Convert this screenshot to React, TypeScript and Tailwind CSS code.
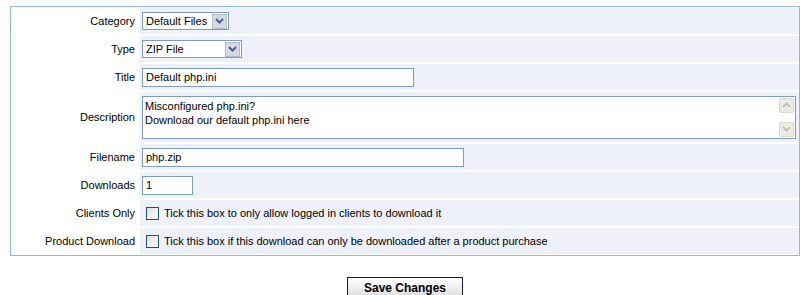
import React from "react"

const font = { fontFamily: '"Liberation Sans", Arial, sans-serif' }

function Label({ children }: { children: React.ReactNode }) {
  return <div className="flex items-center justify-end pr-[3px] text-[11px] text-black">{children}</div>
}

function Field({ children, tall }: { children: React.ReactNode; tall?: boolean }) {
  return (
    <div className={`flex items-center bg-[#eef1f9] pl-[2px] ${tall ? "h-[50px]" : "h-[26px]"}`}>{children}</div>
  )
}

function ArrowBox({ up }: { up?: boolean }) {
  return (
    <div className="flex h-[15px] w-[15px] items-center justify-center border border-[#b6bccb] bg-[#d4d9e6]">
      <svg width="9" height="6" viewBox="0 0 9 6">
        <path
          d={up ? "M1 5 L4.5 1.5 L8 5" : "M1 1 L4.5 4.5 L8 1"}
          fill="none"
          stroke="#4d6185"
          strokeWidth="2"
        />
      </svg>
    </div>
  )
}

function FakeSelect({ value, width }: { value: string; width: string }) {
  return (
    <div className={`flex h-[18px] items-center justify-between border border-[#7f9db9] bg-white pl-[3px] pr-[1px] ${width}`}>
      <span className="text-[11px] text-black">{value}</span>
      <ArrowBox />
    </div>
  )
}

function TextBox({ value, width }: { value: string; width: string }) {
  return (
    <div className={`flex h-[19px] items-center border border-[#7f9db9] bg-white pl-[3px] text-[11px] text-black ${width}`}>
      {value}
    </div>
  )
}

function Checkbox() {
  return (
    <div className="ml-[4px] mr-[5px] h-[13px] w-[13px] border border-[#1c5180] bg-gradient-to-br from-[#dcdcd7] to-white" />
  )
}

export default function App(): React.ReactElement {
  return (
    <div className="h-[295px] w-[808px] overflow-hidden bg-white" style={font}>
      <div className="ml-[10px] mt-[6px] w-[790px] border border-[#8db6e5] p-[1px]">
        <div className="grid grid-cols-[126px_659px] gap-[2px]">
          <Label>Category</Label>
          <Field>
            <FakeSelect value="Default Files" width="w-[87px]" />
          </Field>

          <Label>Type</Label>
          <Field>
            <FakeSelect value="ZIP File" width="w-[100px]" />
          </Field>

          <Label>Title</Label>
          <Field>
            <TextBox value="Default php.ini" width="w-[272px]" />
          </Field>

          <Label>Description</Label>
          <Field tall>
            <div className="flex h-[43px] w-[654px] border border-[#7f9db9] bg-white">
              <div className="flex-1 pl-[2px] pt-[2px] text-[11px] leading-[14px] text-black">
                Misconfigured php.ini?
                <br />
                Download our default php.ini here
              </div>
              <div className="flex w-[16px] flex-col justify-between bg-[#fbfbf9] py-[1px] pr-[1px]">
                <ArrowBoxScroll up />
                <ArrowBoxScroll />
              </div>
            </div>
          </Field>

          <Label>Filename</Label>
          <Field>
            <TextBox value="php.zip" width="w-[322px]" />
          </Field>

          <Label>Downloads</Label>
          <Field>
            <TextBox value="1" width="w-[51px]" />
          </Field>

          <Label>Clients Only</Label>
          <Field>
            <Checkbox />
            <span className="text-[11px] text-black">Tick this box to only allow logged in clients to download it</span>
          </Field>

          <Label>Product Download</Label>
          <Field>
            <Checkbox />
            <span className="text-[11px] text-black">
              Tick this box if this download can only be downloaded after a product purchase
            </span>
          </Field>
        </div>
      </div>

      <div className="mt-[21px] flex justify-center pl-[2px]">
        <button
          className="h-[21px] w-[116px] border border-[#1a1a2e] bg-gradient-to-b from-white via-[#f0f0f0] to-[#dcdcdc] text-[12px] font-bold text-black"
          style={font}
        >
          Save Changes
        </button>
      </div>
    </div>
  )
}

function ArrowBoxScroll({ up }: { up?: boolean }) {
  return (
    <div className="flex h-[15px] w-[15px] items-center justify-center rounded-[2px] border border-[#d8d8cf] bg-[#ecebe4]">
      <svg width="9" height="6" viewBox="0 0 9 6">
        <path
          d={up ? "M1 5 L4.5 1.5 L8 5" : "M1 1 L4.5 4.5 L8 1"}
          fill="none"
          stroke="#b7b7ad"
          strokeWidth="1.6"
        />
      </svg>
    </div>
  )
}
